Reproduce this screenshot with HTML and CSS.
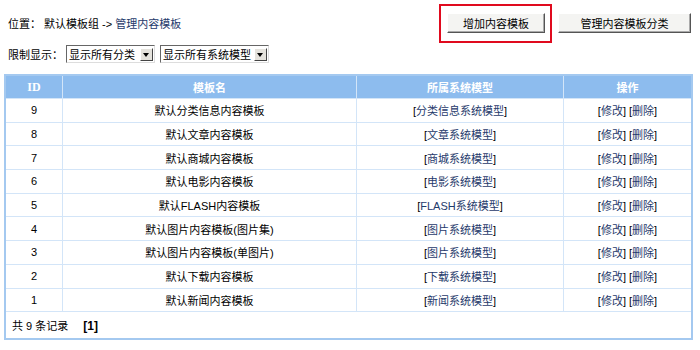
FILE: index.html
```html
<!DOCTYPE html>
<html>
<head>
  <meta charset="UTF-8">
  <title>管理内容模板</title>
  <link rel="stylesheet" href="styles.css">
</head>
<body>
  <div class="top">
    <div class="place">位置： 默认模板组 -&gt; <a href="#">管理内容模板</a></div>
    <div class="actions">
      <div class="mark"><button class="btn">增加内容模板</button></div>
      <button class="btn btn-wide">管理内容模板分类</button>
    </div>
  </div>
  <div class="filter">
    <span class="label">限制显示：</span>
    <span class="select s1">显示所有分类<i class="arrow"></i></span>
    <span class="select s2">显示所有系统模型<i class="arrow"></i></span>
  </div>

  <table class="list">
    <tr class="head">
      <th class="c-id">ID</th>
      <th class="c-name">模板名</th>
      <th class="c-model">所属系统模型</th>
      <th class="c-op">操作</th>
    </tr>
    <tr><td>9</td><td>默认分类信息内容模板</td><td>[<a href="#">分类信息系统模型</a>]</td><td>[<a href="#">修改</a>] [<a href="#">删除</a>]</td></tr>
    <tr><td>8</td><td>默认文章内容模板</td><td>[<a href="#">文章系统模型</a>]</td><td>[<a href="#">修改</a>] [<a href="#">删除</a>]</td></tr>
    <tr><td>7</td><td>默认商城内容模板</td><td>[<a href="#">商城系统模型</a>]</td><td>[<a href="#">修改</a>] [<a href="#">删除</a>]</td></tr>
    <tr><td>6</td><td>默认电影内容模板</td><td>[<a href="#">电影系统模型</a>]</td><td>[<a href="#">修改</a>] [<a href="#">删除</a>]</td></tr>
    <tr><td>5</td><td>默认FLASH内容模板</td><td>[<a href="#">FLASH系统模型</a>]</td><td>[<a href="#">修改</a>] [<a href="#">删除</a>]</td></tr>
    <tr><td>4</td><td>默认图片内容模板(图片集)</td><td>[<a href="#">图片系统模型</a>]</td><td>[<a href="#">修改</a>] [<a href="#">删除</a>]</td></tr>
    <tr><td>3</td><td>默认图片内容模板(单图片)</td><td>[<a href="#">图片系统模型</a>]</td><td>[<a href="#">修改</a>] [<a href="#">删除</a>]</td></tr>
    <tr><td>2</td><td>默认下载内容模板</td><td>[<a href="#">下载系统模型</a>]</td><td>[<a href="#">修改</a>] [<a href="#">删除</a>]</td></tr>
    <tr><td>1</td><td>默认新闻内容模板</td><td>[<a href="#">新闻系统模型</a>]</td><td>[<a href="#">修改</a>] [<a href="#">删除</a>]</td></tr>
    <tr class="foot"><td colspan="4">共 9 条记录 <b class="pages">[1]</b></td></tr>
  </table>
</body>
</html>
```

FILE: styles.css
```css
body {
  margin: 0;
  padding: 0 7px 0 4px;
  font-family: "Liberation Sans", "Noto Sans CJK SC", sans-serif;
  font-size: 11px;
  color: #000;
  background: #fff;
}
a {
  color: #1f3a6b;
  text-decoration: none;
}
.top {
  display: flex;
  justify-content: space-between;
  align-items: center;
  height: 44px;
  padding-top: 1px;
}
.place {
  padding-left: 4px;
}
.actions {
  display: flex;
  align-items: center;
  gap: 6px;
}
.mark {
  border: 2px solid #e00a1e;
  padding: 7px 5px 8px 6px;
}
.btn {
  font-family: "Liberation Sans", "Noto Sans CJK SC", sans-serif;
  font-size: 11px;
  height: 20px;
  width: 98px;
  padding: 0;
  background: #f4f4f2;
  border: 1px solid;
  border-color: #fff #555 #555 #fff;
  box-shadow: inset -1px -1px 0 #aaa;
}
.btn-wide {
  width: 133px;
  margin-right: 2px;
}
.filter {
  display: flex;
  align-items: center;
  gap: 5px;
  padding-left: 4px;
  height: 18px;
  white-space: nowrap;
}
.label {
  width: 53px;
}
.select {
  display: flex;
  align-items: center;
  justify-content: space-between;
  border: 1px solid;
  border-color: #666 #ddd #ddd #666;
  padding: 0 1px 0 2px;
  box-sizing: border-box;
  height: 18px;
  overflow: hidden;
}
.s1 { width: 89px; }
.s2 { width: 109px; }
.arrow {
  flex: none;
  width: 13px;
  height: 13px;
  background: #e4e2dc;
  border: 1px solid;
  border-color: #fff #444 #444 #fff;
  box-sizing: border-box;
  position: relative;
}
.arrow::after {
  content: "";
  position: absolute;
  left: 2px;
  top: 4px;
  border-left: 3.5px solid transparent;
  border-right: 3.5px solid transparent;
  border-top: 4px solid #000;
}
.list {
  width: 100%;
  margin-top: 11px;
  border-collapse: collapse;
  border: 2px solid #a4c9f0;
  font-size: 11px;
}
.list th,
.list td {
  border: 1px solid #d3e5f8;
  text-align: center;
  height: 22.7px;
  padding: 0;
}
.head th {
  background: #8dbcee;
  color: #fff;
  font-weight: bold;
  border-color: #d3e5f8;
  height: 22px;
}
.c-id {
  width: 56px;
  font-family: "Liberation Serif", serif;
  font-size: 12px;
}
.c-name { width: 293px; }
.c-model { width: 206px; }
.list .foot td {
  text-align: left;
  padding-left: 6px;
  height: 26px;
}
.pages {
  margin-left: 12px;
  font-size: 12px;
}
```
